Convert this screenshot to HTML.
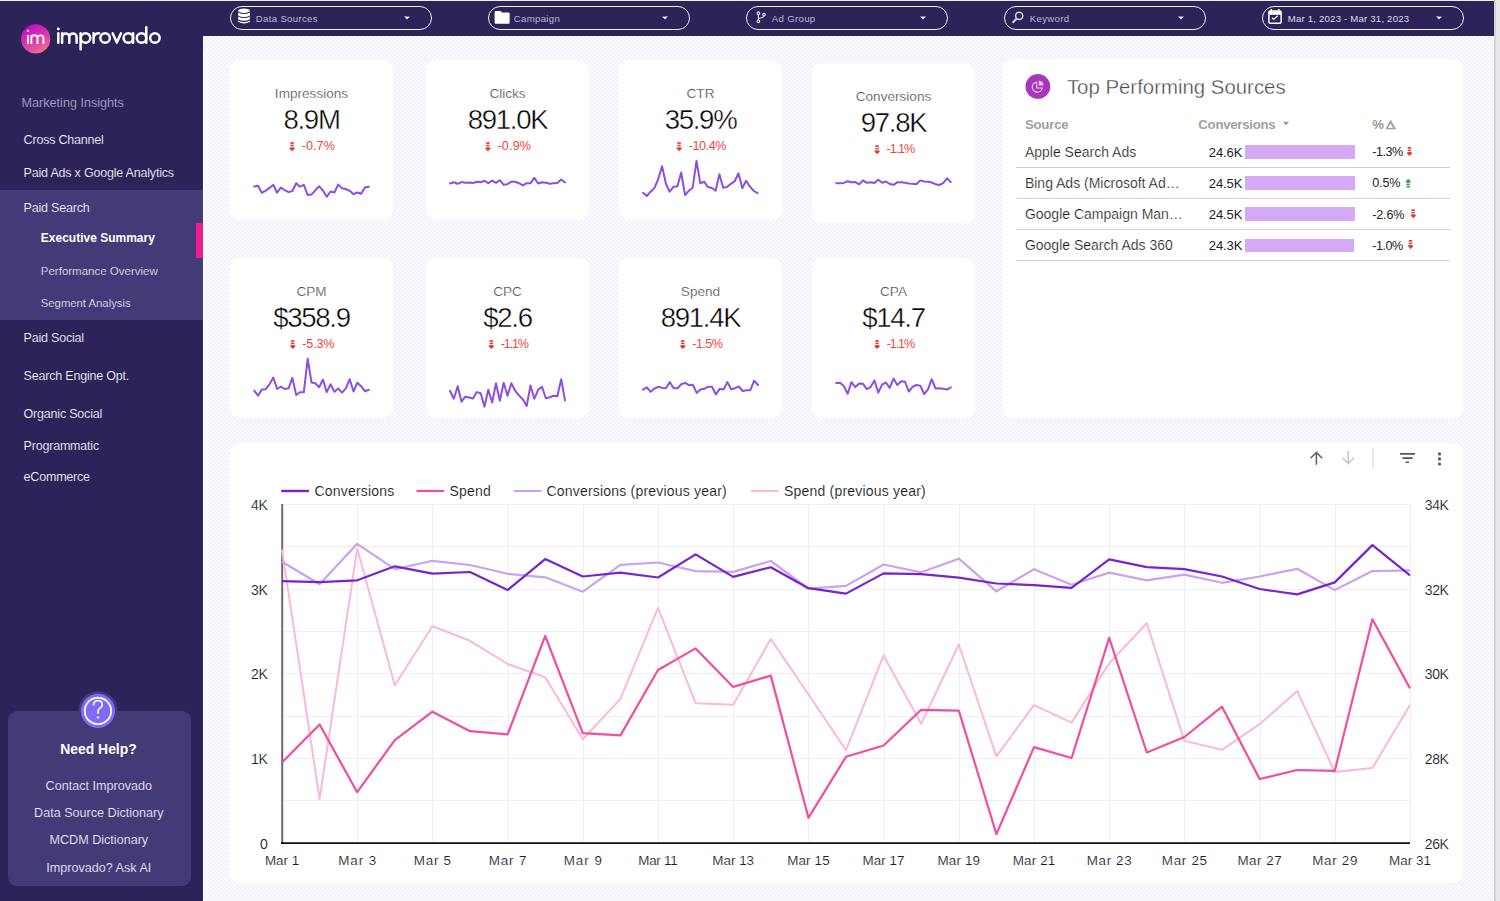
<!DOCTYPE html>
<html><head><meta charset="utf-8"><title>Improvado Executive Summary</title>
<style>
html,body{margin:0;padding:0;}
body{width:1500px;height:901px;overflow:hidden;position:relative;background:radial-gradient(circle at 1px 1px,#efeaf6 0.45px,rgba(249,249,254,0) 0.95px) 0 0/4px 4px,radial-gradient(circle at 1px 1px,#efeaf6 0.45px,rgba(249,249,254,0) 0.95px) 2px 2px/4px 4px,#f9f9fe;font-family:"Liberation Sans", sans-serif;}
.t{position:absolute;line-height:1;white-space:nowrap;}
.r{position:absolute;}
svg{position:absolute;left:0;top:0;overflow:visible;}
</style></head><body>

<div class="r" style="left:0.00px;top:0.00px;width:1500.00px;height:1.00px;background:#eeeeea;"></div>
<div class="r" style="left:1494.00px;top:0.00px;width:6.00px;height:901.00px;background:#e8e8ea;"></div>
<div class="r" style="left:1494.00px;top:0.00px;width:1.50px;height:901.00px;background:#d4d4d8;"></div>
<div class="r" style="left:0.00px;top:1.00px;width:203.00px;height:900.00px;background:#2c2359;"></div>
<div class="r" style="left:203.00px;top:1.00px;width:1291.00px;height:35.00px;background:#2c2359;"></div>
<div class="r" style="left:203.00px;top:36.00px;width:1.20px;height:865.00px;background:#ffffff;"></div>
<svg width="1500" height="901" style="pointer-events:none">
<defs><linearGradient id="lg" x1="0.25" y1="0" x2="0.75" y2="1"><stop offset="0" stop-color="#bd08c9"/><stop offset="0.5" stop-color="#d63aa8"/><stop offset="1" stop-color="#ec7590"/></linearGradient></defs>
<circle cx="35.7" cy="38.9" r="14.6" fill="url(#lg)"/>
<g fill="none" stroke="#fbf2fb" stroke-width="1.95" stroke-linecap="butt">
<path d="M27.9 35.0 V43.95"/>
<path d="M31.3 35.0 V43.95 M31.3 38.3 A3.1 3.1 0 0 1 37.5 38.3 V43.95 M37.5 38.3 A2.95 2.95 0 0 1 43.4 38.3 V43.95"/>
</g>
<circle cx="27.9" cy="30.9" r="1.05" fill="#fbf2fb"/>
<g fill="none" stroke="#ffffff" stroke-width="2.5" stroke-linecap="round" stroke-linejoin="round">
<path d="M58.3 33.3 V42.75"/>
<path d="M62.1 33.3 V42.75 M62.1 37.05 A3.6 3.6 0 0 1 69.3 37.05 V42.75 M69.3 37.05 A3.65 3.65 0 0 1 76.6 37.05 V42.75"/>
<path d="M80.6 33.3 V49.3"/><circle cx="85.5" cy="38" r="4.75"/>
<path d="M93.6 42.75 V33.3 M93.6 37.2 Q94.6 33.3 99.0 33.3"/>
<circle cx="105.1" cy="38" r="4.75"/>
<path d="M112.6 33.3 L116.8 42.6 L121 33.3"/>
<circle cx="128.3" cy="38" r="4.75"/><path d="M133.05 33.3 V42.75"/>
<circle cx="141.5" cy="38" r="4.75"/><path d="M146.25 27.2 V42.75"/>
<circle cx="154.9" cy="38" r="4.75"/>
</g>
<circle cx="58.3" cy="28.9" r="1.45" fill="#ffffff"/>
</svg>
<div class="r" style="left:0.00px;top:190.00px;width:203.00px;height:129.50px;background:#433a78;"></div>
<div class="r" style="left:196.20px;top:223.00px;width:7.00px;height:35.00px;background:#f41b8c;"></div>
<div class="t" style="top:97.33px;font-size:12.60px;color:#aba6c6;left:21.60px;-webkit-text-stroke:0.12px #2c2359;">Marketing Insights</div>
<div class="t" style="top:133.52px;font-size:12.50px;color:#f2f0f8;letter-spacing:-0.20px;left:23.60px;-webkit-text-stroke:0.12px #2c2359;">Cross Channel</div>
<div class="t" style="top:167.42px;font-size:12.50px;color:#f2f0f8;letter-spacing:-0.20px;left:23.60px;-webkit-text-stroke:0.12px #2c2359;">Paid Ads x Google Analytics</div>
<div class="t" style="top:201.52px;font-size:12.50px;color:#f2f0f8;letter-spacing:-0.20px;left:23.60px;-webkit-text-stroke:0.12px #433a78;">Paid Search</div>
<div class="t" style="top:232.44px;font-size:12.00px;color:#ffffff;font-weight:700;left:40.80px;">Executive Summary</div>
<div class="t" style="top:266.17px;font-size:11.50px;color:#e2dfee;left:40.80px;-webkit-text-stroke:0.12px #433a78;">Performance Overview</div>
<div class="t" style="top:298.23px;font-size:11.30px;color:#e2dfee;left:40.80px;-webkit-text-stroke:0.12px #433a78;">Segment Analysis</div>
<div class="t" style="top:331.72px;font-size:12.50px;color:#f2f0f8;letter-spacing:-0.20px;left:23.60px;-webkit-text-stroke:0.12px #2c2359;">Paid Social</div>
<div class="t" style="top:369.72px;font-size:12.50px;color:#f2f0f8;letter-spacing:-0.20px;left:23.60px;-webkit-text-stroke:0.12px #2c2359;">Search Engine Opt.</div>
<div class="t" style="top:407.72px;font-size:12.50px;color:#f2f0f8;letter-spacing:-0.20px;left:23.60px;-webkit-text-stroke:0.12px #2c2359;">Organic Social</div>
<div class="t" style="top:440.02px;font-size:12.50px;color:#f2f0f8;letter-spacing:-0.20px;left:23.60px;-webkit-text-stroke:0.12px #2c2359;">Programmatic</div>
<div class="t" style="top:470.72px;font-size:12.50px;color:#f2f0f8;letter-spacing:-0.20px;left:23.60px;-webkit-text-stroke:0.12px #2c2359;">eCommerce</div>
<div class="r" style="left:7.85px;top:711.20px;width:183.50px;height:175.00px;background:#433a78;border-radius:9px;"></div>
<svg width="1500" height="901">
<circle cx="97.95" cy="710.95" r="19.8" fill="#433a78"/>
<circle cx="97.95" cy="710.95" r="17.1" fill="#7d6af6"/>
<circle cx="97.95" cy="710.95" r="13.2" fill="none" stroke="#f6f2ea" stroke-width="1.9"/>
<path d="M93.6 704.6 Q93.8 700.6 98 700.6 Q102.2 700.6 102.2 704.4 Q102.2 706.8 99.8 708.2 Q98 709.3 98 711.6 L98 713" fill="none" stroke="#f6f2ea" stroke-width="1.8" stroke-linecap="round"/>
<circle cx="98" cy="717.4" r="1.2" fill="#f6f2ea"/>
</svg>
<div class="t" style="top:742.63px;font-size:13.90px;color:#ffffff;font-weight:700;left:-201.50px;width:600px;text-align:center;">Need Help?</div>
<div class="t" style="top:780.03px;font-size:12.60px;color:#ebe8f4;left:-201.20px;width:600px;text-align:center;-webkit-text-stroke:0.12px #433a78;">Contact Improvado</div>
<div class="t" style="top:806.53px;font-size:12.60px;color:#ebe8f4;left:-201.20px;width:600px;text-align:center;-webkit-text-stroke:0.12px #433a78;">Data Source Dictionary</div>
<div class="t" style="top:833.53px;font-size:12.60px;color:#ebe8f4;left:-201.20px;width:600px;text-align:center;-webkit-text-stroke:0.12px #433a78;">MCDM Dictionary</div>
<div class="t" style="top:861.73px;font-size:12.60px;color:#ebe8f4;left:-201.20px;width:600px;text-align:center;-webkit-text-stroke:0.12px #433a78;">Improvado? Ask AI</div>
<div class="r" style="left:230.0px;top:6.3px;width:199.6px;height:21.6px;border:1.4px solid #f2f0f7;border-radius:12px;"></div>
<div class="t" style="top:13.77px;font-size:9.60px;color:#bdb8d4;letter-spacing:0.33px;left:255.80px;">Data Sources</div>
<svg width="1500" height="901"><path d="M404.0 16.6 L410.0 16.6 L407.0 19.6 Z" fill="#e8e6f0"/></svg>
<svg width="1500" height="901"><g fill="#ffffff">
<ellipse cx="244" cy="10.8" rx="6" ry="2.2"/>
<path d="M238 12.6 Q244 15.6 250 12.6 L250 15.4 Q244 18.4 238 15.4 Z"/>
<path d="M238 16.6 Q244 19.6 250 16.6 L250 19.2 Q244 22.2 238 19.2 Z"/>
<path d="M238 20.4 Q244 23.4 250 20.4 L250 21.8 Q244 25.2 238 21.8 Z"/>
</g></svg>
<div class="r" style="left:488.0px;top:6.3px;width:199.6px;height:21.6px;border:1.4px solid #f2f0f7;border-radius:12px;"></div>
<div class="t" style="top:13.77px;font-size:9.60px;color:#bdb8d4;letter-spacing:0.33px;left:513.80px;">Campaign</div>
<svg width="1500" height="901"><path d="M662.0 16.6 L668.0 16.6 L665.0 19.6 Z" fill="#e8e6f0"/></svg>
<svg width="1500" height="901"><path d="M494.6 12.2 Q494.6 11.1 495.6 11.1 L500.6 11.1 L502 12.6 L508.6 12.6 Q509.6 12.6 509.6 13.6 L509.6 22.8 Q509.6 23.8 508.6 23.8 L495.6 23.8 Q494.6 23.8 494.6 22.8 Z" fill="#ffffff"/></svg>
<div class="r" style="left:746.0px;top:6.3px;width:199.6px;height:21.6px;border:1.4px solid #f2f0f7;border-radius:12px;"></div>
<div class="t" style="top:13.77px;font-size:9.60px;color:#bdb8d4;letter-spacing:0.33px;left:771.80px;">Ad Group</div>
<svg width="1500" height="901"><path d="M920.0 16.6 L926.0 16.6 L923.0 19.6 Z" fill="#e8e6f0"/></svg>
<svg width="1500" height="901"><g fill="none" stroke="#d8d4e6" stroke-width="1.2">
<circle cx="758.4" cy="13.2" r="1.3"/><circle cx="764" cy="14.6" r="1.3"/><circle cx="758.4" cy="21.3" r="1.3"/>
<path d="M758.4 14.5 L758.4 20"/><path d="M764 15.9 Q763.6 17.8 758.4 18.4"/>
</g></svg>
<div class="r" style="left:1004.0px;top:6.3px;width:199.6px;height:21.6px;border:1.4px solid #f2f0f7;border-radius:12px;"></div>
<div class="t" style="top:13.77px;font-size:9.60px;color:#bdb8d4;letter-spacing:0.33px;left:1029.80px;">Keyword</div>
<svg width="1500" height="901"><path d="M1178.0 16.6 L1184.0 16.6 L1181.0 19.6 Z" fill="#e8e6f0"/></svg>
<svg width="1500" height="901"><g fill="none" stroke="#d8d4e6" stroke-width="1.5">
<circle cx="1019.2" cy="15.8" r="3.6"/><path d="M1016.6 18.6 L1012.6 22.8" stroke-width="2"/>
</g></svg>
<div class="r" style="left:1262.0px;top:6.3px;width:199.6px;height:21.6px;border:1.4px solid #f2f0f7;border-radius:12px;"></div>
<div class="t" style="top:13.77px;font-size:9.60px;color:#dedbe8;letter-spacing:0.20px;left:1287.80px;">Mar 1, 2023 - Mar 31, 2023</div>
<svg width="1500" height="901"><path d="M1436.0 16.6 L1442.0 16.6 L1439.0 19.6 Z" fill="#e8e6f0"/></svg>
<svg width="1500" height="901"><g fill="none" stroke="#ffffff">
<rect x="1268.9" y="11.1" width="12.2" height="12.2" rx="1.3" stroke-width="1.5"/>
<path d="M1268.9 13 L1281.1 13" stroke-width="3.6"/>
<path d="M1271.3 9 L1271.3 11.5 M1278.7 9 L1278.7 11.5" stroke-width="1.5"/>
<path d="M1272 17.6 L1273.8 19.4 L1277.6 15.7" stroke-width="1.3"/>
</g></svg>
<div class="r" style="left:230.00px;top:60.00px;width:163.00px;height:159.50px;background:#ffffff;border-radius:10px;"></div>
<div class="t" style="top:86.59px;font-size:13.60px;color:#4e4e4e;left:11.50px;width:600px;text-align:center;-webkit-text-stroke:0.22px #ffffff;">Impressions</div>
<div class="t" style="top:106.14px;font-size:27.60px;color:#000000;letter-spacing:-1.30px;left:11.50px;width:600px;text-align:center;-webkit-text-stroke:0.42px #ffffff;">8.9M</div>
<svg width="1500" height="901"><g fill="#ee3a30"><rect x="290.40" y="142.20" width="3.4" height="1.7"/><rect x="290.40" y="144.80" width="3.4" height="1.4"/><path d="M290.40 147.20 L293.80 147.20 L294.90 148.50 L292.20 151.20 L289.50 148.50 Z"/></g></svg>
<div class="t" style="top:140.33px;font-size:12.60px;color:#f0463c;letter-spacing:0.08px;left:301.70px;">-0.7%</div>
<div class="r" style="left:426.00px;top:60.00px;width:163.00px;height:159.50px;background:#ffffff;border-radius:10px;"></div>
<div class="t" style="top:86.59px;font-size:13.60px;color:#4e4e4e;left:207.50px;width:600px;text-align:center;-webkit-text-stroke:0.22px #ffffff;">Clicks</div>
<div class="t" style="top:106.14px;font-size:27.60px;color:#000000;letter-spacing:-1.30px;left:207.50px;width:600px;text-align:center;-webkit-text-stroke:0.42px #ffffff;">891.0K</div>
<svg width="1500" height="901"><g fill="#ee3a30"><rect x="486.15" y="142.20" width="3.4" height="1.7"/><rect x="486.15" y="144.80" width="3.4" height="1.4"/><path d="M486.15 147.20 L489.55 147.20 L490.65 148.50 L487.95 151.20 L485.25 148.50 Z"/></g></svg>
<div class="t" style="top:140.33px;font-size:12.60px;color:#f0463c;letter-spacing:0.18px;left:497.45px;">-0.9%</div>
<div class="r" style="left:619.00px;top:60.00px;width:163.00px;height:159.50px;background:#ffffff;border-radius:10px;"></div>
<div class="t" style="top:86.59px;font-size:13.60px;color:#4e4e4e;left:400.50px;width:600px;text-align:center;-webkit-text-stroke:0.22px #ffffff;">CTR</div>
<div class="t" style="top:106.14px;font-size:27.60px;color:#000000;letter-spacing:-1.30px;left:400.50px;width:600px;text-align:center;-webkit-text-stroke:0.42px #ffffff;">35.9%</div>
<svg width="1500" height="901"><g fill="#ee3a30"><rect x="677.35" y="142.20" width="3.4" height="1.7"/><rect x="677.35" y="144.80" width="3.4" height="1.4"/><path d="M677.35 147.20 L680.75 147.20 L681.85 148.50 L679.15 151.20 L676.45 148.50 Z"/></g></svg>
<div class="t" style="top:140.33px;font-size:12.60px;color:#f0463c;letter-spacing:-0.42px;left:688.65px;">-10.4%</div>
<div class="r" style="left:812.00px;top:63.00px;width:163.00px;height:159.50px;background:#ffffff;border-radius:10px;"></div>
<div class="t" style="top:89.59px;font-size:13.60px;color:#4e4e4e;left:593.50px;width:600px;text-align:center;-webkit-text-stroke:0.22px #ffffff;">Conversions</div>
<div class="t" style="top:109.14px;font-size:27.60px;color:#000000;letter-spacing:-1.30px;left:593.50px;width:600px;text-align:center;-webkit-text-stroke:0.42px #ffffff;">97.8K</div>
<svg width="1500" height="901"><g fill="#ee3a30"><rect x="875.35" y="145.20" width="3.4" height="1.7"/><rect x="875.35" y="147.80" width="3.4" height="1.4"/><path d="M875.35 150.20 L878.75 150.20 L879.85 151.50 L877.15 154.20 L874.45 151.50 Z"/></g></svg>
<div class="t" style="top:143.33px;font-size:12.60px;color:#f0463c;letter-spacing:-1.10px;left:886.65px;">-1.1%</div>
<div class="r" style="left:230.00px;top:258.00px;width:163.00px;height:160.00px;background:#ffffff;border-radius:10px;"></div>
<div class="t" style="top:284.79px;font-size:13.60px;color:#4e4e4e;left:11.50px;width:600px;text-align:center;-webkit-text-stroke:0.22px #ffffff;">CPM</div>
<div class="t" style="top:303.64px;font-size:27.60px;color:#000000;letter-spacing:-1.30px;left:11.50px;width:600px;text-align:center;-webkit-text-stroke:0.42px #ffffff;">$358.9</div>
<svg width="1500" height="901"><g fill="#ee3a30"><rect x="291.05" y="340.10" width="3.4" height="1.7"/><rect x="291.05" y="342.70" width="3.4" height="1.4"/><path d="M291.05 345.10 L294.45 345.10 L295.55 346.40 L292.85 349.10 L290.15 346.40 Z"/></g></svg>
<div class="t" style="top:338.23px;font-size:12.60px;color:#f0463c;letter-spacing:-0.18px;left:302.35px;">-5.3%</div>
<div class="r" style="left:426.00px;top:258.00px;width:163.00px;height:160.00px;background:#ffffff;border-radius:10px;"></div>
<div class="t" style="top:284.79px;font-size:13.60px;color:#4e4e4e;left:207.50px;width:600px;text-align:center;-webkit-text-stroke:0.22px #ffffff;">CPC</div>
<div class="t" style="top:303.64px;font-size:27.60px;color:#000000;letter-spacing:-1.30px;left:207.50px;width:600px;text-align:center;-webkit-text-stroke:0.42px #ffffff;">$2.6</div>
<svg width="1500" height="901"><g fill="#ee3a30"><rect x="489.55" y="340.10" width="3.4" height="1.7"/><rect x="489.55" y="342.70" width="3.4" height="1.4"/><path d="M489.55 345.10 L492.95 345.10 L494.05 346.40 L491.35 349.10 L488.65 346.40 Z"/></g></svg>
<div class="t" style="top:338.23px;font-size:12.60px;color:#f0463c;letter-spacing:-1.18px;left:500.85px;">-1.1%</div>
<div class="r" style="left:619.00px;top:258.00px;width:163.00px;height:160.00px;background:#ffffff;border-radius:10px;"></div>
<div class="t" style="top:284.79px;font-size:13.60px;color:#4e4e4e;left:400.50px;width:600px;text-align:center;-webkit-text-stroke:0.22px #ffffff;">Spend</div>
<div class="t" style="top:303.64px;font-size:27.60px;color:#000000;letter-spacing:-1.30px;left:400.50px;width:600px;text-align:center;-webkit-text-stroke:0.42px #ffffff;">891.4K</div>
<svg width="1500" height="901"><g fill="#ee3a30"><rect x="681.00" y="340.10" width="3.4" height="1.7"/><rect x="681.00" y="342.70" width="3.4" height="1.4"/><path d="M681.00 345.10 L684.40 345.10 L685.50 346.40 L682.80 349.10 L680.10 346.40 Z"/></g></svg>
<div class="t" style="top:338.23px;font-size:12.60px;color:#f0463c;letter-spacing:-0.56px;left:692.30px;">-1.5%</div>
<div class="r" style="left:812.00px;top:258.00px;width:163.00px;height:160.00px;background:#ffffff;border-radius:10px;"></div>
<div class="t" style="top:284.79px;font-size:13.60px;color:#4e4e4e;left:593.50px;width:600px;text-align:center;-webkit-text-stroke:0.22px #ffffff;">CPA</div>
<div class="t" style="top:303.64px;font-size:27.60px;color:#000000;letter-spacing:-1.30px;left:593.50px;width:600px;text-align:center;-webkit-text-stroke:0.42px #ffffff;">$14.7</div>
<svg width="1500" height="901"><g fill="#ee3a30"><rect x="875.35" y="340.10" width="3.4" height="1.7"/><rect x="875.35" y="342.70" width="3.4" height="1.4"/><path d="M875.35 345.10 L878.75 345.10 L879.85 346.40 L877.15 349.10 L874.45 346.40 Z"/></g></svg>
<div class="t" style="top:338.23px;font-size:12.60px;color:#f0463c;letter-spacing:-1.10px;left:886.65px;">-1.1%</div>
<svg width="1500" height="901"><g fill="none" stroke="#8c4fe2" stroke-width="2" stroke-linejoin="round" stroke-linecap="round">
<path d="M254.2 186.5 L258.0 185.8 L261.8 192.9 L265.7 190.7 L269.5 187.9 L273.3 184.8 L277.1 192.7 L280.9 187.5 L284.7 190.2 L288.6 192.1 L292.4 191.0 L296.2 183.2 L300.0 186.7 L303.8 184.8 L307.7 195.0 L311.5 194.6 L315.3 190.4 L319.1 186.3 L322.9 190.4 L326.7 196.8 L330.6 191.5 L334.4 192.5 L338.2 184.6 L342.0 188.3 L345.8 189.0 L349.7 190.8 L353.5 194.2 L357.3 192.5 L361.1 193.8 L364.9 187.5 L368.8 186.8"/>
<path d="M450.0 183.5 L453.8 182.3 L457.7 183.8 L461.5 182.1 L465.3 182.7 L469.2 182.5 L473.0 183.1 L476.8 181.7 L480.7 182.3 L484.5 180.8 L488.3 183.2 L492.2 180.7 L496.0 182.9 L499.8 180.2 L503.7 184.8 L507.5 184.2 L511.3 181.7 L515.2 181.7 L519.0 183.2 L522.8 185.4 L526.7 183.2 L530.5 183.3 L534.3 177.9 L538.2 183.5 L542.0 182.2 L545.8 182.7 L549.7 183.8 L553.5 183.3 L557.3 182.9 L561.2 179.6 L565.0 182.5"/>
<path d="M643.0 192.7 L646.8 196.0 L650.6 191.7 L654.5 187.9 L658.3 178.8 L662.1 166.2 L665.9 183.8 L669.7 191.7 L673.6 186.7 L677.4 186.2 L681.2 172.5 L685.0 195.0 L688.8 190.8 L692.7 187.7 L696.5 160.8 L700.3 183.2 L704.1 181.7 L707.9 187.1 L711.8 187.9 L715.6 190.7 L719.4 174.2 L723.2 187.7 L727.0 187.1 L730.9 183.8 L734.7 181.2 L738.5 173.3 L742.3 188.3 L746.1 180.7 L750.0 186.7 L753.8 191.0 L757.6 193.2"/>
<path d="M836.2 183.2 L840.1 183.3 L843.9 182.9 L847.7 181.2 L851.5 182.3 L855.3 182.1 L859.2 184.3 L863.0 180.4 L866.8 182.8 L870.6 182.2 L874.4 182.9 L878.3 179.8 L882.1 182.7 L885.9 181.5 L889.7 184.0 L893.5 184.8 L897.3 182.3 L901.2 182.2 L905.0 182.7 L908.8 183.5 L912.6 183.8 L916.4 184.2 L920.3 180.4 L924.1 181.5 L927.9 181.7 L931.7 182.5 L935.5 184.2 L939.3 185.0 L943.2 183.2 L947.0 178.3 L950.8 182.1"/>
<path d="M254.2 390.7 L258.0 395.7 L261.8 389.6 L265.7 389.2 L269.5 384.2 L273.3 377.5 L277.1 389.0 L280.9 386.7 L284.7 389.0 L288.6 388.3 L292.4 377.9 L296.2 395.0 L300.0 392.3 L303.8 392.3 L307.7 358.8 L311.5 382.5 L315.3 383.3 L319.1 387.3 L322.9 379.6 L326.7 392.1 L330.6 384.2 L334.4 391.7 L338.2 388.5 L342.0 392.7 L345.8 388.3 L349.7 379.2 L353.5 391.5 L357.3 382.7 L361.1 386.2 L364.9 391.2 L368.8 389.8"/>
<path d="M450.0 390.8 L453.8 398.8 L457.7 386.2 L461.5 401.7 L465.3 396.7 L469.2 397.5 L473.0 398.5 L476.8 392.1 L480.7 393.2 L484.5 406.7 L488.3 389.8 L492.2 402.5 L496.0 383.3 L499.8 400.8 L503.7 382.7 L507.5 395.8 L511.3 383.2 L515.2 390.8 L519.0 395.4 L522.8 399.2 L526.7 406.0 L530.5 385.4 L534.3 398.8 L538.2 389.6 L542.0 386.8 L545.8 398.3 L549.7 397.3 L553.5 395.8 L557.3 396.2 L561.2 379.3 L565.0 400.4"/>
<path d="M643.0 389.6 L646.8 387.3 L650.7 391.8 L654.5 388.5 L658.3 386.8 L662.2 387.9 L666.0 388.2 L669.8 382.1 L673.7 388.2 L677.5 388.3 L681.3 384.2 L685.2 382.9 L689.0 385.2 L692.8 384.8 L696.7 392.9 L700.5 389.6 L704.3 388.8 L708.2 386.7 L712.0 386.8 L715.8 394.3 L719.7 388.8 L723.5 389.6 L727.3 382.1 L731.2 389.2 L735.0 388.2 L738.8 386.5 L742.7 391.0 L746.5 390.2 L750.3 390.2 L754.2 380.7 L758.0 385.0"/>
<path d="M836.2 382.9 L840.1 382.7 L843.9 386.2 L847.7 393.8 L851.5 382.1 L855.3 387.1 L859.2 383.5 L863.0 383.8 L866.8 389.2 L870.6 387.1 L874.4 380.4 L878.3 392.7 L882.1 384.6 L885.9 382.5 L889.7 387.9 L893.5 378.5 L897.3 385.0 L901.2 381.2 L905.0 381.7 L908.8 391.5 L912.6 386.8 L916.4 385.0 L920.3 385.7 L924.1 394.0 L927.9 389.6 L931.7 379.2 L935.5 388.5 L939.3 388.2 L943.2 388.8 L947.0 389.6 L950.8 387.3"/>
</g></svg>
<div class="r" style="left:1003.00px;top:59.00px;width:460.00px;height:359.00px;background:#ffffff;border-radius:10px;"></div>
<svg width="1500" height="901">
<circle cx="1037.9" cy="86.4" r="12.4" fill="#a935b9"/>
<g fill="none" stroke="#ecc8f2" stroke-width="1.2">
<path d="M1036.6 82.2 A5 5 0 1 0 1042.2 88 L1036.6 88 Z"/>
</g>
<path d="M1038.8 80.6 A5 5 0 0 1 1043.6 85.6 L1038.8 85.6 Z" fill="#ecc8f2"/>
</svg>
<div class="t" style="top:76.93px;font-size:20.40px;color:#4a4a4a;left:1066.90px;-webkit-text-stroke:0.35px #ffffff;">Top Performing Sources</div>
<div class="t" style="top:118.43px;font-size:13.20px;color:#a0a0a0;font-weight:700;letter-spacing:-0.20px;left:1024.90px;">Source</div>
<div class="t" style="top:118.43px;font-size:13.20px;color:#a0a0a0;font-weight:700;letter-spacing:-0.25px;left:1198.30px;">Conversions</div>
<svg width="1500" height="901"><path d="M1283 121.8 L1289 121.8 L1286 125.6 Z" fill="#9b9b9b"/></svg>
<div class="t" style="top:118.43px;font-size:13.20px;color:#9b9b9b;font-weight:700;left:1372.20px;">%</div>
<svg width="1500" height="901"><path d="M1390.9 120.2 L1396.2 129.3 L1385.6 129.3 Z M1390.5 123.6 L1388.0 127.9 L1393.0 127.9 Z" fill="#a0a0a0" fill-rule="evenodd"/><path d="M1390.9 120.2 L1386.6 128.5" stroke="#a0a0a0" stroke-width="1.2"/></svg>
<div class="t" style="top:145.15px;font-size:14.00px;color:#1e1e1e;left:1024.90px;-webkit-text-stroke:0.2px #ffffff;">Apple Search Ads</div>
<div class="t" style="top:146.00px;font-size:13.00px;color:#222222;letter-spacing:-0.10px;left:642.30px;width:600px;text-align:right;">24.6K</div>
<div class="r" style="left:1244.70px;top:145.20px;width:110.60px;height:13.40px;background:#d4aaf6;"></div>
<div class="t" style="top:146.33px;font-size:12.60px;color:#222222;letter-spacing:-0.50px;left:1372.20px;">-1.3%</div>
<svg width="1500" height="901"><g fill="#ee3a30"><rect x="1407.70" y="147.00" width="3.4" height="1.7"/><rect x="1407.70" y="149.60" width="3.4" height="1.4"/><path d="M1407.70 152.00 L1411.10 152.00 L1412.20 153.30 L1409.50 156.00 L1406.80 153.30 Z"/></g></svg>
<div class="r" style="left:1016.40px;top:166.70px;width:434.10px;height:1.00px;background:#cfcfcf;"></div>
<div class="t" style="top:176.25px;font-size:14.00px;color:#1e1e1e;left:1024.90px;-webkit-text-stroke:0.2px #ffffff;">Bing Ads (Microsoft Ad&#8230;</div>
<div class="t" style="top:177.10px;font-size:13.00px;color:#222222;letter-spacing:-0.10px;left:642.30px;width:600px;text-align:right;">24.5K</div>
<div class="r" style="left:1244.70px;top:176.30px;width:110.60px;height:13.40px;background:#d4aaf6;"></div>
<div class="t" style="top:177.43px;font-size:12.60px;color:#222222;letter-spacing:-0.15px;left:1372.20px;">0.5%</div>
<svg width="1500" height="901"><g fill="#3a9a48"><path d="M1408.20 178.80 L1410.90 181.50 L1409.80 182.80 L1406.40 182.80 L1405.50 181.50 Z"/><rect x="1406.40" y="183.60" width="3.4" height="1.4"/><rect x="1406.40" y="185.80" width="3.4" height="1.7"/></g></svg>
<div class="r" style="left:1016.40px;top:197.80px;width:434.10px;height:1.00px;background:#cfcfcf;"></div>
<div class="t" style="top:207.35px;font-size:14.00px;color:#1e1e1e;left:1024.90px;-webkit-text-stroke:0.2px #ffffff;">Google Campaign Man&#8230;</div>
<div class="t" style="top:208.20px;font-size:13.00px;color:#222222;letter-spacing:-0.10px;left:642.30px;width:600px;text-align:right;">24.5K</div>
<div class="r" style="left:1244.70px;top:207.40px;width:110.10px;height:13.40px;background:#d4aaf6;"></div>
<div class="t" style="top:208.53px;font-size:12.60px;color:#222222;letter-spacing:-0.15px;left:1372.20px;">-2.6%</div>
<svg width="1500" height="901"><g fill="#ee3a30"><rect x="1411.50" y="209.30" width="3.4" height="1.7"/><rect x="1411.50" y="211.90" width="3.4" height="1.4"/><path d="M1411.50 214.30 L1414.90 214.30 L1416.00 215.60 L1413.30 218.30 L1410.60 215.60 Z"/></g></svg>
<div class="r" style="left:1016.40px;top:228.90px;width:434.10px;height:1.00px;background:#cfcfcf;"></div>
<div class="t" style="top:238.45px;font-size:14.00px;color:#1e1e1e;left:1024.90px;-webkit-text-stroke:0.2px #ffffff;">Google Search Ads 360</div>
<div class="t" style="top:239.30px;font-size:13.00px;color:#222222;letter-spacing:-0.10px;left:642.30px;width:600px;text-align:right;">24.3K</div>
<div class="r" style="left:1244.70px;top:238.50px;width:109.10px;height:13.40px;background:#d4aaf6;"></div>
<div class="t" style="top:239.63px;font-size:12.60px;color:#222222;letter-spacing:-0.50px;left:1372.20px;">-1.0%</div>
<svg width="1500" height="901"><g fill="#ee3a30"><rect x="1408.80" y="240.00" width="3.4" height="1.7"/><rect x="1408.80" y="242.60" width="3.4" height="1.4"/><path d="M1408.80 245.00 L1412.20 245.00 L1413.30 246.30 L1410.60 249.00 L1407.90 246.30 Z"/></g></svg>
<div class="r" style="left:1016.40px;top:260.00px;width:434.10px;height:1.00px;background:#cfcfcf;"></div>
<div class="r" style="left:230.00px;top:443.00px;width:1233.00px;height:440.00px;background:#ffffff;border-radius:10px;"></div>
<svg width="1500" height="901">
<g fill="none" stroke-width="1.6" stroke-linecap="butt">
<path d="M1316.4 452.4 L1316.4 464.8 M1310.6 458.2 L1316.4 452.4 L1322.2 458.2" stroke="#666666"/>
<path d="M1348.3 451.1 L1348.3 463.5 M1342.5 457.7 L1348.3 463.5 L1354.1 457.7" stroke="#c8c8c8"/>
<path d="M1373 448 L1373 467.8" stroke="#dddddd" stroke-width="1.4"/>
<path d="M1400.1 453.9 L1415 453.9 M1402.5 458.1 L1412.6 458.1 M1405.8 462.3 L1409 462.3" stroke="#555555"/>
</g>
<g fill="#555555"><circle cx="1439.5" cy="453.9" r="1.6"/><circle cx="1439.5" cy="458.9" r="1.6"/><circle cx="1439.5" cy="464" r="1.6"/></g>
</svg>
<svg width="1500" height="901"><g stroke="#efefef" stroke-width="1" fill="none">
<path d="M357.5 504.5 L357.5 843.0"/>
<path d="M432.5 504.5 L432.5 843.0"/>
<path d="M508.5 504.5 L508.5 843.0"/>
<path d="M583.5 504.5 L583.5 843.0"/>
<path d="M658.5 504.5 L658.5 843.0"/>
<path d="M733.5 504.5 L733.5 843.0"/>
<path d="M808.5 504.5 L808.5 843.0"/>
<path d="M884.5 504.5 L884.5 843.0"/>
<path d="M959.5 504.5 L959.5 843.0"/>
<path d="M1034.5 504.5 L1034.5 843.0"/>
<path d="M1109.5 504.5 L1109.5 843.0"/>
<path d="M1184.5 504.5 L1184.5 843.0"/>
<path d="M1260.5 504.5 L1260.5 843.0"/>
<path d="M1335.5 504.5 L1335.5 843.0"/>
<path d="M1410.5 504.5 L1410.5 843.0"/>
<path d="M282.0 504.5 L1410.0 504.5"/>
<path d="M282.0 546.5 L1410.0 546.5"/>
<path d="M282.0 589.5 L1410.0 589.5"/>
<path d="M282.0 631.5 L1410.0 631.5"/>
<path d="M282.0 673.5 L1410.0 673.5"/>
<path d="M282.0 716.5 L1410.0 716.5"/>
<path d="M282.0 758.5 L1410.0 758.5"/>
<path d="M282.0 800.5 L1410.0 800.5"/>
</g>
<path d="M282.2 504 L282.2 844" stroke="#6a6a6a" stroke-width="2"/>
<path d="M281 843.2 L1410 843.2" stroke="#111111" stroke-width="1.7"/>
<path d="M282.0 549.7 L319.6 799.1 L357.2 548.6 L394.8 685.3 L432.4 626.3 L470.0 640.8 L507.6 664.0 L545.2 677.2 L582.8 739.3 L620.4 698.9 L658.0 607.8 L695.6 703.2 L733.2 704.7 L770.8 639.1 L808.4 694.3 L846.0 750.2 L883.6 655.4 L921.2 723.8 L958.8 644.5 L996.4 756.4 L1034.0 705.1 L1071.6 722.6 L1109.2 663.2 L1146.8 623.2 L1184.4 740.9 L1222.0 749.8 L1259.6 724.2 L1297.2 691.1 L1334.8 772.0 L1372.4 768.1 L1410.0 705.1" fill="none" stroke="#fcb8d8" stroke-width="2" stroke-linejoin="round"/>
<path d="M282.0 561.7 L319.6 584.2 L357.2 543.8 L394.8 569.2 L432.4 560.8 L470.0 565.0 L507.6 573.8 L545.2 577.3 L582.8 591.7 L620.4 564.9 L658.0 562.5 L695.6 571.1 L733.2 571.9 L770.8 561.0 L808.4 588.6 L846.0 585.9 L883.6 564.5 L921.2 572.3 L958.8 558.7 L996.4 591.3 L1034.0 569.2 L1071.6 584.7 L1109.2 572.6 L1146.8 580.4 L1184.4 574.6 L1222.0 582.8 L1259.6 576.5 L1297.2 568.8 L1334.8 590.1 L1372.4 571.1 L1410.0 570.3" fill="none" stroke="#c9a3ee" stroke-width="2.2" stroke-linejoin="round"/>
<path d="M282.0 762.6 L319.6 724.5 L357.2 792.2 L394.8 740.1 L432.4 711.7 L470.0 731.2 L507.6 734.3 L545.2 636.0 L582.8 733.1 L620.4 735.4 L658.0 670.0 L695.6 648.4 L733.2 686.9 L770.8 675.6 L808.4 817.8 L846.0 756.8 L883.6 745.5 L921.2 709.8 L958.8 710.6 L996.4 834.1 L1034.0 747.1 L1071.6 758.0 L1109.2 637.9 L1146.8 752.5 L1184.4 737.0 L1222.0 706.7 L1259.6 779.0 L1297.2 770.0 L1334.8 770.8 L1372.4 619.3 L1410.0 688.4" fill="none" stroke="#f04ea0" stroke-width="2.2" stroke-linejoin="round"/>
<path d="M282.0 581.2 L319.6 582.2 L357.2 580.3 L394.8 566.3 L432.4 573.7 L470.0 572.0 L507.6 590.1 L545.2 559.1 L582.8 576.5 L620.4 572.6 L658.0 577.5 L695.6 554.4 L733.2 576.9 L770.8 567.2 L808.4 588.2 L846.0 593.6 L883.6 573.4 L921.2 574.2 L958.8 577.7 L996.4 583.5 L1034.0 585.1 L1071.6 587.8 L1109.2 559.4 L1146.8 567.2 L1184.4 569.2 L1222.0 576.5 L1259.6 589.0 L1297.2 594.4 L1334.8 582.4 L1372.4 545.1 L1410.0 575.4" fill="none" stroke="#7a22d0" stroke-width="2.2" stroke-linejoin="round"/>
<path d="M281.2 491 L309 491" stroke="#7a22cc" stroke-width="2.4"/>
<path d="M416.5 491 L444.2 491" stroke="#f04ea0" stroke-width="2.2"/>
<path d="M513.8 491 L541.5 491" stroke="#c9a3ee" stroke-width="2.2"/>
<path d="M751 491 L778.7 491" stroke="#fcb8d8" stroke-width="2"/>
</svg>
<div class="t" style="top:484.25px;font-size:14.00px;color:#1a1a1a;letter-spacing:0.20px;left:314.50px;-webkit-text-stroke:0.12px #ffffff;">Conversions</div>
<div class="t" style="top:484.25px;font-size:14.00px;color:#1a1a1a;letter-spacing:0.20px;left:449.50px;-webkit-text-stroke:0.12px #ffffff;">Spend</div>
<div class="t" style="top:484.25px;font-size:14.00px;color:#1a1a1a;letter-spacing:0.20px;left:546.50px;-webkit-text-stroke:0.12px #ffffff;">Conversions (previous year)</div>
<div class="t" style="top:484.25px;font-size:14.00px;color:#1a1a1a;letter-spacing:0.20px;left:784.00px;-webkit-text-stroke:0.12px #ffffff;">Spend (previous year)</div>
<div class="t" style="top:836.65px;font-size:14.00px;color:#222222;letter-spacing:-0.45px;left:-332.70px;width:600px;text-align:right;-webkit-text-stroke:0.12px #ffffff;">0</div>
<div class="t" style="top:752.02px;font-size:14.00px;color:#222222;letter-spacing:-0.45px;left:-332.70px;width:600px;text-align:right;-webkit-text-stroke:0.12px #ffffff;">1K</div>
<div class="t" style="top:667.40px;font-size:14.00px;color:#222222;letter-spacing:-0.45px;left:-332.70px;width:600px;text-align:right;-webkit-text-stroke:0.12px #ffffff;">2K</div>
<div class="t" style="top:582.77px;font-size:14.00px;color:#222222;letter-spacing:-0.45px;left:-332.70px;width:600px;text-align:right;-webkit-text-stroke:0.12px #ffffff;">3K</div>
<div class="t" style="top:498.15px;font-size:14.00px;color:#222222;letter-spacing:-0.45px;left:-332.70px;width:600px;text-align:right;-webkit-text-stroke:0.12px #ffffff;">4K</div>
<div class="t" style="top:836.65px;font-size:14.00px;color:#222222;letter-spacing:-0.45px;left:1424.80px;-webkit-text-stroke:0.12px #ffffff;">26K</div>
<div class="t" style="top:752.02px;font-size:14.00px;color:#222222;letter-spacing:-0.45px;left:1424.80px;-webkit-text-stroke:0.12px #ffffff;">28K</div>
<div class="t" style="top:667.40px;font-size:14.00px;color:#222222;letter-spacing:-0.45px;left:1424.80px;-webkit-text-stroke:0.12px #ffffff;">30K</div>
<div class="t" style="top:582.77px;font-size:14.00px;color:#222222;letter-spacing:-0.45px;left:1424.80px;-webkit-text-stroke:0.12px #ffffff;">32K</div>
<div class="t" style="top:498.15px;font-size:14.00px;color:#222222;letter-spacing:-0.45px;left:1424.80px;-webkit-text-stroke:0.12px #ffffff;">34K</div>
<div class="t" style="top:853.96px;font-size:13.40px;color:#1e1e1e;letter-spacing:-0.01px;left:-18.01px;width:600px;text-align:center;-webkit-text-stroke:0.12px #ffffff;">Mar 1</div>
<div class="t" style="top:853.96px;font-size:13.40px;color:#1e1e1e;letter-spacing:0.91px;left:57.66px;width:600px;text-align:center;-webkit-text-stroke:0.12px #ffffff;">Mar 3</div>
<div class="t" style="top:853.96px;font-size:13.40px;color:#1e1e1e;letter-spacing:0.74px;left:132.77px;width:600px;text-align:center;-webkit-text-stroke:0.12px #ffffff;">Mar 5</div>
<div class="t" style="top:853.96px;font-size:13.40px;color:#1e1e1e;letter-spacing:0.91px;left:208.06px;width:600px;text-align:center;-webkit-text-stroke:0.12px #ffffff;">Mar 7</div>
<div class="t" style="top:853.96px;font-size:13.40px;color:#1e1e1e;letter-spacing:0.99px;left:283.29px;width:600px;text-align:center;-webkit-text-stroke:0.12px #ffffff;">Mar 9</div>
<div class="t" style="top:853.96px;font-size:13.40px;color:#1e1e1e;letter-spacing:-0.24px;left:357.88px;width:600px;text-align:center;-webkit-text-stroke:0.12px #ffffff;">Mar 11</div>
<div class="t" style="top:853.96px;font-size:13.40px;color:#1e1e1e;letter-spacing:-0.00px;left:433.20px;width:600px;text-align:center;-webkit-text-stroke:0.12px #ffffff;">Mar 13</div>
<div class="t" style="top:853.96px;font-size:13.40px;color:#1e1e1e;letter-spacing:0.16px;left:508.48px;width:600px;text-align:center;-webkit-text-stroke:0.12px #ffffff;">Mar 15</div>
<div class="t" style="top:853.96px;font-size:13.40px;color:#1e1e1e;letter-spacing:0.06px;left:583.63px;width:600px;text-align:center;-webkit-text-stroke:0.12px #ffffff;">Mar 17</div>
<div class="t" style="top:853.96px;font-size:13.40px;color:#1e1e1e;letter-spacing:0.16px;left:658.88px;width:600px;text-align:center;-webkit-text-stroke:0.12px #ffffff;">Mar 19</div>
<div class="t" style="top:853.96px;font-size:13.40px;color:#1e1e1e;letter-spacing:0.16px;left:734.08px;width:600px;text-align:center;-webkit-text-stroke:0.12px #ffffff;">Mar 21</div>
<div class="t" style="top:853.96px;font-size:13.40px;color:#1e1e1e;letter-spacing:0.64px;left:809.52px;width:600px;text-align:center;-webkit-text-stroke:0.12px #ffffff;">Mar 23</div>
<div class="t" style="top:853.96px;font-size:13.40px;color:#1e1e1e;letter-spacing:0.70px;left:884.75px;width:600px;text-align:center;-webkit-text-stroke:0.12px #ffffff;">Mar 25</div>
<div class="t" style="top:853.96px;font-size:13.40px;color:#1e1e1e;letter-spacing:0.54px;left:959.87px;width:600px;text-align:center;-webkit-text-stroke:0.12px #ffffff;">Mar 27</div>
<div class="t" style="top:853.96px;font-size:13.40px;color:#1e1e1e;letter-spacing:0.70px;left:1035.15px;width:600px;text-align:center;-webkit-text-stroke:0.12px #ffffff;">Mar 29</div>
<div class="t" style="top:853.96px;font-size:13.40px;color:#1e1e1e;letter-spacing:0.06px;left:1110.03px;width:600px;text-align:center;-webkit-text-stroke:0.12px #ffffff;">Mar 31</div>
</body></html>
